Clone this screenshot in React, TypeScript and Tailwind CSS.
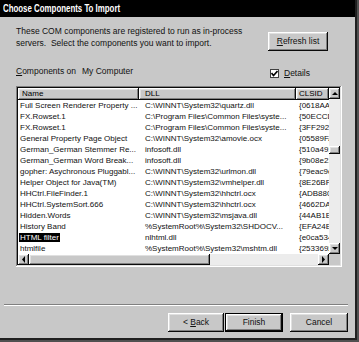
const rows: [string, string, string][] = [
  ["Full Screen Renderer Property ...", "C:\\WINNT\\System32\\quartz.dll", "{0618AA30-6BC4}"],
  ["FX.Rowset.1", "C:\\Program Files\\Common Files\\syste...", "{50ECCD8E-1234}"],
  ["FX.Rowset.1", "C:\\Program Files\\Common Files\\syste...", "{3FF292B6-B204}"],
  ["General Property Page Object", "C:\\WINNT\\System32\\amovie.ocx", "{05589FAF-C356}"],
  ["German_German Stemmer Re...", "infosoft.dll", "{510a4910-7f24}"],
  ["German_German Word Break...", "infosoft.dll", "{9b08e210-e51b}"],
  ["gopher: Asychronous Pluggabl...", "C:\\WINNT\\System32\\urlmon.dll", "{79eac9e4-baf9}"],
  ["Helper Object for Java(TM)", "C:\\WINNT\\System32\\vmhelper.dll", "{8E26BFC1-AFD6}"],
  ["HHCtrl.FileFinder.1", "C:\\WINNT\\System32\\hhctrl.ocx", "{ADB880A4-D8FF}"],
  ["HHCtrl.SystemSort.666", "C:\\WINNT\\System32\\hhctrl.ocx", "{4662DAAF-D393}"],
  ["Hidden.Words", "C:\\WINNT\\System32\\msjava.dll", "{44AB1E23-D1F8}"],
  ["History Band", "%SystemRoot%\\System32\\SHDOCV...", "{EFA24E61-B078}"],
  ["HTML filter", "nlhtml.dll", "{e0ca5340-4534}"],
  ["htmlfile", "%SystemRoot%\\System32\\mshtm.dll", "{25336920-03F9}"],
];

const raised =
  "bg-[#c8c8c8] shadow-[inset_-1px_-1px_#0a0a0a,inset_1px_1px_#ffffff,inset_-2px_-2px_#808080,inset_2px_2px_#e0e0e0]";

const Arrow = ({ dir }: { dir: "up" | "down" | "left" | "right" }) => {
  const pts = {
    up: "1,4 4,1 7,4",
    down: "1,1 4,4 7,1",
    left: "4,0 4,7 1,3.5",
    right: "1,0 1,7 4,3.5",
  }[dir];
  const w = dir === "up" || dir === "down" ? 8 : 5;
  const h = dir === "up" || dir === "down" ? 5 : 7;
  return (
    <div className={`${raised} w-[11px] h-[11px] flex items-center justify-center shrink-0`}>
      <svg width={w} height={h} viewBox={`0 0 ${w} ${h}`}>
        <polygon points={pts} fill="#000" />
      </svg>
    </div>
  );
};

const Button = ({ children, def, className }: { children: React.ReactNode; def?: boolean; className?: string }) => (
  <div className={`${className ?? ""} ${def ? "border border-black" : ""} h-[19px]`}>
    <div className={`${raised} h-full flex items-center justify-center text-[8.5px] text-[#111]`}>{children}</div>
  </div>
);

const App = () => {
  return (
    <div className="w-[359px] h-[342px] bg-[#505050] overflow-hidden" style={{ fontFamily: '"Liberation Sans", Arial, sans-serif' }}>
      <div className="w-[357px] h-[340px] bg-[#c8c8c8] border-r-2 border-b-2 border-[#202020] flex flex-col">
        {/* title bar */}
        <div className="h-[17px] bg-black text-white font-bold text-[10.5px] flex items-center pl-[3px] shrink-0">
          <span className="inline-block origin-left scale-x-[0.75] whitespace-nowrap">Choose Components To Import</span>
        </div>

        {/* intro + refresh */}
        <div className="h-[48px] pt-[8px] pl-[16px] flex shrink-0">
          <div className="w-[252px] text-[8.5px] leading-[12px] text-[#111]">
            <div>These COM components are registered to run as in-process</div>
            <div>servers.&nbsp; Select the components you want to import.</div>
          </div>
          <Button className="w-[60px] mt-[7px]">
            <span><span className="underline">R</span>efresh list</span>
          </Button>
        </div>

        {/* components on + details */}
        <div className="h-[21px] pl-[16px] flex text-[8.5px] text-[#111] shrink-0">
          <div className="w-[254px] h-[12px] flex items-center">
            <span><span className="underline">C</span>omponents on</span>
            <span className="ml-[6px]">My Computer</span>
          </div>
          <div className="h-[12px] flex items-center mt-[2px]">
            <div className="w-[9px] h-[9px] bg-white border border-[#404040] flex items-center justify-center">
              <svg width="7" height="7" viewBox="0 0 7 7">
                <polyline points="0.5,3 2.5,5.5 6.5,1" fill="none" stroke="#000" strokeWidth="1.6" />
              </svg>
            </div>
            <span className="ml-[5px]"><span className="underline">D</span>etails</span>
          </div>
        </div>

        {/* list box */}
        <div className="ml-[16px] w-[326px] h-[181px] p-[2px] bg-white shadow-[inset_-1px_-1px_#ffffff,inset_1px_1px_#808080,inset_-2px_-2px_#e0e0e0,inset_2px_2px_#0a0a0a] shrink-0">
          <div className="flex h-full">
            <div className="w-[311px] flex flex-col">
              <div className="h-[12px] flex text-[8px] text-black shrink-0">
                <div className={`${raised} w-[121px] pl-[4px] flex items-center`}>Name</div>
                <div className={`${raised} w-[157px] pl-[6px] flex items-center`}>DLL</div>
                <div className={`${raised} w-[33px] pl-[3px] flex items-center overflow-hidden whitespace-nowrap`}>CLSID</div>
              </div>
              <div className="h-[154px] overflow-hidden text-[8px] text-[#111] shrink-0">
                {rows.map(([name, dll, clsid], i) => (
                  <div key={i} className="h-[11px] flex items-center whitespace-nowrap">
                    <div className="w-[121px] pl-[1px] overflow-hidden">
                      {name === "HTML filter" ? (
                        <span className="bg-black text-white px-[1px]">{name}</span>
                      ) : (
                        <span className="px-[1px]">{name}</span>
                      )}
                    </div>
                    <div className="w-[157px] pl-[6px] overflow-hidden">{dll}</div>
                    <div className="w-[33px] pl-[3px] overflow-hidden">{clsid}</div>
                  </div>
                ))}
              </div>
              <div className="h-[11px] flex bg-[#ececec] shrink-0">
                <Arrow dir="left" />
                <div className={`${raised} w-[181px] h-[11px]`} />
                <div className="flex-1" />
                <Arrow dir="right" />
              </div>
            </div>
            <div className="w-[11px] flex flex-col">
              <Arrow dir="up" />
              <div className="flex-1 bg-[#ececec] flex flex-col">
                <div className="h-[47px]" />
                <div className={`${raised} h-[8px]`} />
              </div>
              <Arrow dir="down" />
              <div className="h-[11px] bg-[#c8c8c8]" />
            </div>
          </div>
        </div>

        {/* separator */}
        <div className="mt-[37px] ml-[4px] w-[344px] h-[2px] border-t border-[#808080] border-b border-b-white shrink-0" />

        {/* buttons */}
        <div className="mt-[7px] flex pl-[168px] shrink-0">
          <Button className="w-[56px]">
            <span>&lt; <span className="underline">B</span>ack</span>
          </Button>
          <Button def className="w-[58px] ml-[1px]">Finish</Button>
          <Button className="w-[58px] ml-[7px]">Cancel</Button>
        </div>
      </div>
    </div>
  );
};

export default App;
